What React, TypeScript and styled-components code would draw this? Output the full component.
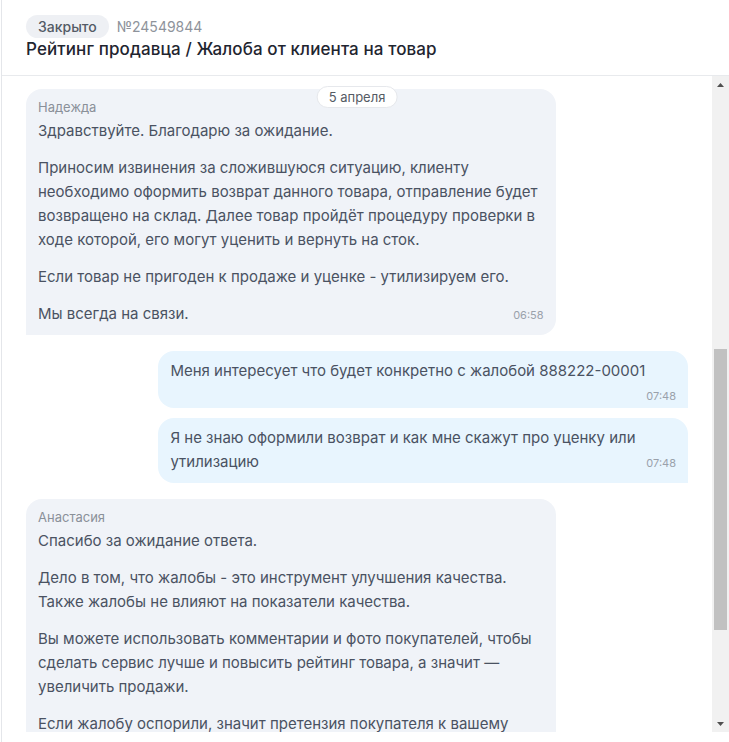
import styled, { createGlobalStyle } from "styled-components";

type Message = {
  id: number;
  author?: string;
  mine?: boolean;
  paragraphs: string[];
  time?: string;
};

const messages: Message[] = [
  {
    id: 1,
    author: "Надежда",
    paragraphs: [
      "Здравствуйте. Благодарю за ожидание.",
      "Приносим извинения за сложившуюся ситуацию, клиенту необходимо оформить возврат данного товара, отправление будет возвращено на склад. Далее товар пройдёт процедуру проверки в ходе которой, его могут уценить и вернуть на сток.",
      "Если товар не пригоден к продаже и уценке - утилизируем его.",
      "Мы всегда на связи.",
    ],
    time: "06:58",
  },
  {
    id: 2,
    mine: true,
    paragraphs: ["Меня интересует что будет конкретно с жалобой 888222-00001"],
    time: "07:48",
  },
  {
    id: 3,
    mine: true,
    paragraphs: ["Я не знаю оформили возврат и как мне скажут про уценку или утилизацию"],
    time: "07:48",
  },
  {
    id: 4,
    author: "Анастасия",
    paragraphs: [
      "Спасибо за ожидание ответа.",
      "Дело в том, что жалобы - это инструмент улучшения качества. Также жалобы не влияют на показатели качества.",
      "Вы можете использовать комментарии и фото покупателей, чтобы сделать сервис лучше и повысить рейтинг товара, а значит — увеличить продажи.",
      "Если жалобу оспорили, значит претензия покупателя к вашему товару была признана необоснованной.",
    ],
    time: "09:12",
  },
];

const App = () => {
  return (
    <>
      <GlobalStyle />
      <Panel>
        <Header>
          <HeaderRow>
            <Status>Закрыто</Status>
            <TicketNumber>№24549844</TicketNumber>
          </HeaderRow>
          <Title>Рейтинг продавца / Жалоба от клиента на товар</Title>
        </Header>
        <Viewport>
          <Feed>
            <DateChip>5 апреля</DateChip>
            {messages.map((m, i) => {
              const prev = messages[i - 1];
              const newGroup = !prev || !!prev.mine !== !!m.mine;
              return (
                <Bubble key={m.id} $mine={!!m.mine} $first={i === 0} $newGroup={newGroup}>
                  {m.author && <Author>{m.author}</Author>}
                  {m.paragraphs.map((p, j) => (
                    <Paragraph key={j}>
                      {p}
                      {j === m.paragraphs.length - 1 && m.time && <Time>{m.time}</Time>}
                    </Paragraph>
                  ))}
                </Bubble>
              );
            })}
          </Feed>
          <Scrollbar>
            <ScrollArrow>
              <svg width="7" height="4" viewBox="0 0 7 4">
                <path d="M0 4 L3.5 0 L7 4 Z" fill="#505050" />
              </svg>
            </ScrollArrow>
            <Track>
              <Thumb />
            </Track>
            <ScrollArrow>
              <svg width="7" height="4" viewBox="0 0 7 4">
                <path d="M0 0 L3.5 4 L7 0 Z" fill="#505050" />
              </svg>
            </ScrollArrow>
          </Scrollbar>
        </Viewport>
      </Panel>
    </>
  );
};

export default App;

const GlobalStyle = createGlobalStyle`
  html, body {
    margin: 0;
    padding: 0;
    background: #ffffff;
  }
  body {
    font-family: Inter, "Noto Sans", "Liberation Sans", sans-serif;
    -webkit-font-smoothing: antialiased;
  }
`;

const Panel = styled.div`
  display: flex;
  flex-direction: column;
  height: 742px;
  margin-left: 1px;
  border-left: 1px solid #e4e6ea;
  background: #ffffff;
  overflow: hidden;
`;

const Header = styled.div`
  padding: 15px 24px 14px;
  border-bottom: 1px solid #e8eaed;
`;

const HeaderRow = styled.div`
  display: flex;
  align-items: center;
  gap: 8px;
  height: 22px;
`;

const Status = styled.span`
  display: inline-flex;
  align-items: center;
  height: 23px;
  padding: 0 12px;
  border-radius: 12px;
  background: #eef0f4;
  color: #545b66;
  font-size: 14px;
  font-weight: 500;
`;

const TicketNumber = styled.span`
  color: #8e939b;
  font-size: 14px;
`;

const Title = styled.h1`
  margin: 0;
  font-size: 17px;
  letter-spacing: 0.1px;
  line-height: 24px;
  font-weight: 500;
  color: #1f2530;
`;

const Viewport = styled.div`
  position: relative;
  display: flex;
  height: 656px;
`;

const Feed = styled.div`
  flex: 1;
  display: flex;
  flex-direction: column;
  padding: 0 24px;
  overflow: hidden;
`;

const DateChip = styled.div`
  position: absolute;
  top: 10px;
  left: calc((100% - 17px) / 2);
  transform: translateX(-50%);
  z-index: 2;
  height: 20px;
  padding: 0 11px;
  border: 1px solid #e6e8ec;
  border-radius: 11px;
  background: #ffffff;
  color: #555b64;
  font-size: 13px;
  line-height: 20px;
  white-space: nowrap;
`;

const Bubble = styled.div<{ $mine: boolean; $first: boolean; $newGroup: boolean }>`
  display: flow-root;
  flex-shrink: 0;
  align-self: ${(p) => (p.$mine ? "flex-end" : "flex-start")};
  width: 80%;
  box-sizing: border-box;
  margin-top: ${(p) => (p.$first ? "13px" : p.$newGroup ? "16px" : "10px")};
  padding: 8px 12px 9px;
  border-radius: ${(p) => (p.$mine ? "16px 16px 0 16px" : "16px 16px 16px 0")};
  background: ${(p) => (p.$mine ? "#e8f5fe" : "#f0f3f8")};
  color: #4a5262;
`;

const Author = styled.div`
  font-size: 13px;
  line-height: 20px;
  color: #8a9099;
  margin-bottom: 2px;
`;

const Paragraph = styled.p`
  margin: 0 0 13px;
  font-size: 15px;
  line-height: 24px;

  &:last-child {
    margin-bottom: 0;
  }
`;

const Time = styled.span`
  float: right;
  margin: 6px 0 -4px 12px;
  font-size: 11px;
  line-height: 14px;
  color: #9aa1ab;
`;

const Scrollbar = styled.div`
  display: flex;
  flex-direction: column;
  width: 17px;
  flex-shrink: 0;
  background: #f1f1f1;
`;

const ScrollArrow = styled.div`
  display: flex;
  align-items: center;
  justify-content: center;
  height: 17px;
`;

const Track = styled.div`
  flex: 1;
  padding: 0 2px;
`;

const Thumb = styled.div`
  margin-top: 256px;
  height: 281px;
  background: #c1c1c1;
`;
